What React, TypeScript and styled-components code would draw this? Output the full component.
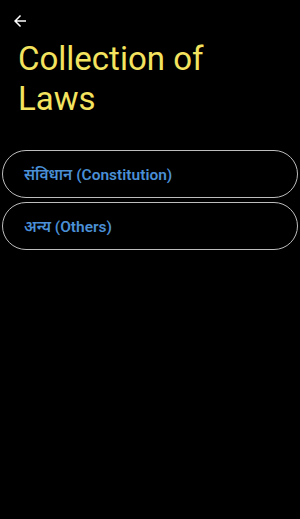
import styled, { createGlobalStyle } from 'styled-components';

const GlobalStyle = createGlobalStyle`
  html, body {
    margin: 0;
    padding: 0;
    background: #000;
  }
  body {
    font-family: Roboto, "Noto Sans", "DejaVu Sans", sans-serif;
  }
`;

const Screen = styled.div`
  display: flex;
  flex-direction: column;
  width: 300px;
  min-height: 519px;
  background: #000;
  box-sizing: border-box;
`;

const TopBar = styled.div`
  display: flex;
  align-items: center;
  height: 32px;
  padding: 9px 0 0 11px;
  box-sizing: border-box;
`;

const BackButton = styled.button`
  display: flex;
  align-items: center;
  justify-content: center;
  width: 18px;
  height: 18px;
  padding: 0;
  border: none;
  background: transparent;
  color: #fff;
  cursor: pointer;
`;

const Title = styled.h1`
  margin: 7px 0 0;
  padding: 0 40px 0 18px;
  font-size: 33px;
  line-height: 40px;
  font-weight: 400;
  color: #f3e35f;
`;

const List = styled.div`
  display: flex;
  flex-direction: column;
  gap: 4px;
  padding: 31px 2px 0;
`;

const LawButton = styled.button`
  display: flex;
  align-items: center;
  height: 48px;
  padding: 0 21px;
  border: 1px solid #bdbdbd;
  border-radius: 9999px;
  background: transparent;
  color: #4a8fd6;
  font-family: Roboto, "Noto Sans", "DejaVu Sans", sans-serif;
  font-size: 15.5px;
  font-weight: 600;
  text-align: left;
  cursor: pointer;
`;

const laws = ['संविधान (Constitution)', 'अन्य (Others)'];

function App() {
  return (
    <>
      <GlobalStyle />
      <Screen>
        <TopBar>
          <BackButton aria-label="Back">
            <svg width="18" height="18" viewBox="0 0 24 24" fill="currentColor">
              <path d="M20 11H7.83l5.59-5.59L12 4l-8 8 8 8 1.41-1.41L7.83 13H20v-2z" />
            </svg>
          </BackButton>
        </TopBar>
        <Title>Collection of Laws</Title>
        <List>
          {laws.map((law) => (
            <LawButton key={law}>{law}</LawButton>
          ))}
        </List>
      </Screen>
    </>
  );
}

export default App;
